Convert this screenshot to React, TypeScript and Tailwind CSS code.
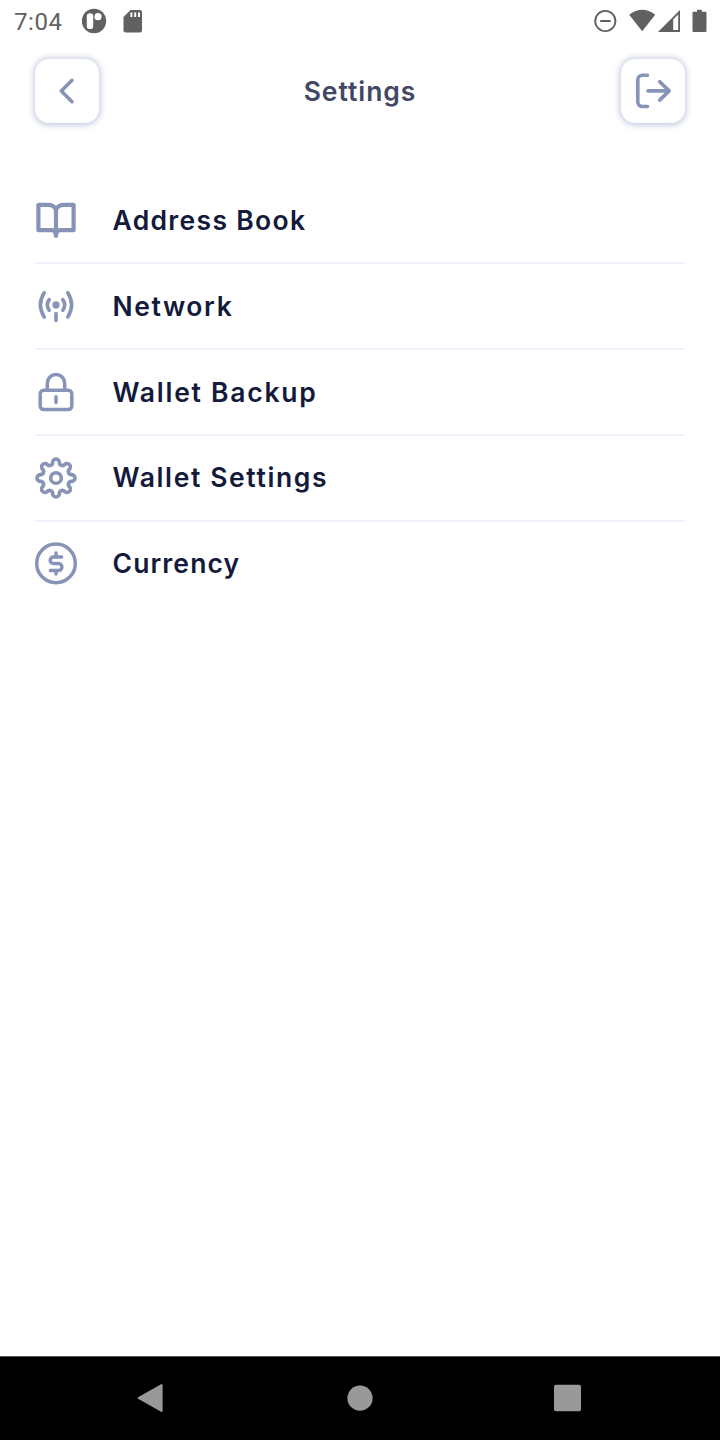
import type { ReactNode } from "react";

const polar = (r: number, deg: number) => {
  const a = (deg * Math.PI) / 180;
  return [21 + r * Math.cos(a), 21 + r * Math.sin(a)];
};

// Eight round teeth joined by round valleys, as tangent arcs.
const gearPath = (() => {
  const tip = 3.4;
  const valley = 3;
  const f = tip / (tip + valley);
  let d = "";
  for (let i = 0; i <= 8; i++) {
    const c = polar(16.1, i * 45);
    const before = polar(16.7, i * 45 - 22.5);
    const after = polar(16.7, i * 45 + 22.5);
    const p = [c[0] + (before[0] - c[0]) * f, c[1] + (before[1] - c[1]) * f];
    const q = [c[0] + (after[0] - c[0]) * f, c[1] + (after[1] - c[1]) * f];
    d += i === 0 ? `M${p[0]} ${p[1]}` : `A${valley} ${valley} 0 0 0 ${p[0]} ${p[1]}`;
    d += i === 8 ? "Z" : `A${tip} ${tip} 0 0 1 ${q[0]} ${q[1]}`;
  }
  return d;
})();

function Icon({ children, width = 3.5 }: { children: ReactNode; width?: number }) {
  return (
    <svg
      className="size-[42px] shrink-0 overflow-visible text-[#8794b7]"
      viewBox="0 0 42 42"
      fill="none"
      stroke="currentColor"
      strokeWidth={width}
      strokeLinecap="round"
      strokeLinejoin="round"
    >
      {children}
    </svg>
  );
}

const items = [
  {
    label: "Address Book",
    text: "tracking-[1.3px]",
    icon: (
      <Icon width={4.2}>
        <path d="M21 10.5C19.5 7.3 16.5 5.8 13 5.8H3.4V31.2H16.5C19.5 31.2 21 33 21 37C21 33 22.5 31.2 25.5 31.2H38.6V5.8H29C25.5 5.8 22.5 7.3 21 10.5V33" />
      </Icon>
    ),
  },
  {
    label: "Network",
    text: "tracking-[1.6px]",
    icon: (
      <Icon width={3.6}>
        <circle cx="21" cy="19.9" r="3.6" fill="currentColor" stroke="none" />
        <path d="M21 28.6V35.4M14.2 14.6Q10.4 19.9 14.2 25.2M27.8 14.6Q31.6 19.9 27.8 25.2M9.2 7.8Q1.6 19.9 9.2 32M32.8 7.8Q40.4 19.9 32.8 32" />
      </Icon>
    ),
  },
  {
    label: "Wallet Backup",
    text: "tracking-[1.75px]",
    icon: (
      <Icon>
        <rect x="5.2" y="19.2" width="31.6" height="19.4" rx="3.5" />
        <path d="M12.3 19V12.2a8.7 8.7 0 0 1 17.4 0V19M21 25.8V31.4" />
      </Icon>
    ),
  },
  {
    label: "Wallet Settings",
    text: "tracking-[1.62px]",
    icon: (
      <Icon width={3.6}>
        <path d={gearPath} />
        <circle cx="21" cy="21" r="5.3" />
      </Icon>
    ),
  },
  {
    label: "Currency",
    text: "tracking-[1.1px]",
    icon: (
      <Icon>
        <circle cx="21" cy="21.4" r="19.3" />
        <path d="M26.6 15H18.5a3.3 3.3 0 0 0 0 6.6H23.5a3.4 3.4 0 0 1 0 6.8H15.4M21 10.9V15M21 28.4V32.1" />
      </Icon>
    ),
  },
];

function HeaderButton({ label, children }: { label: string; children: ReactNode }) {
  return (
    <button
      aria-label={label}
      className="flex size-16 items-center justify-center rounded-[14px] bg-white shadow-[0_0.5px_6px_1px_rgba(120,135,180,0.48)]"
    >
      <svg
        className="size-16 shrink-0 text-[#8794b7]"
        viewBox="0 0 64 64"
        fill="none"
        stroke="currentColor"
        strokeWidth="3.6"
        strokeLinecap="round"
        strokeLinejoin="round"
      >
        {children}
      </svg>
    </button>
  );
}

function StatusBar() {
  return (
    <div className="flex h-[42px] items-center justify-between font-[Roboto,sans-serif] text-[#616161]">
      <div className="flex items-center pl-[14px]">
        <span className="w-[68px] pt-px text-[24px] leading-none tracking-[0.6px]">7:04</span>
        <svg className="h-[26px] w-[64px]" viewBox="82 8 64 26" fill="currentColor">
          <circle cx="94" cy="21" r="12.2" />
          <rect x="86.8" y="13.3" width="6.4" height="15.8" rx="3.2" fill="white" />
          <circle cx="98" cy="16.7" r="3.6" fill="white" />
          <path d="M130.5 10H140a2 2 0 0 1 2 2V30.5a2 2 0 0 1-2 2H125.5a2 2 0 0 1-2-2V17Z" />
          <path d="M130.4 12.5h2v4.5h-2zM134.2 12.5h2v4.5h-2zM138 12.5h2v4.5h-2z" fill="white" />
        </svg>
      </div>
      <svg className="h-[26px] w-[128px]" viewBox="592 8 128 26" fill="currentColor">
        <circle cx="605.3" cy="21" r="10.1" fill="none" stroke="currentColor" strokeWidth="1.9" />
        <path d="M600.2 20h10.4v2h-10.4z" />
        <path d="M629.2 14.8Q642.2 4.9 655.2 14.8L642.2 31.3Z" />
        <path d="M680 10V32H658Z" />
        <path d="M673.2 19.5L678.2 14.5V30H673.2Z" fill="white" />
        <path d="M697 9.8h4.8v2H705.5a1 1 0 0 1 1 1V31a1 1 0 0 1-1 1H693.5a1 1 0 0 1-1-1V12.8a1 1 0 0 1 1-1H697Z" />
      </svg>
    </div>
  );
}

export default function App() {
  return (
    <div className="flex h-[1440px] w-[720px] flex-col overflow-hidden bg-white font-[Inter,sans-serif]">
      <StatusBar />
      <header className="flex h-[98px] items-center justify-between px-[34.5px]">
        <HeaderButton label="Back">
          <path d="M37 21.3L26.3 32L37 42.7" />
        </HeaderButton>
        <h1 className="text-[26.5px] leading-none font-semibold tracking-[0.95px] text-[#434766]">Settings</h1>
        <HeaderButton label="Log out">
          <path d="M26.5 16.2H21.3a4.5 4.5 0 0 0-4.5 4.5V43a4.5 4.5 0 0 0 4.5 4.5H26.5M27 31.9H48.2M38.7 22.7L48.2 31.9L38.7 41.1" />
        </HeaderButton>
      </header>
      <ul className="mt-[38.5px] px-[35px]">
        {items.map((item) => (
          <li
            key={item.label}
            className="flex h-[85.75px] items-center border-b-2 border-[#f0f2fb] last:border-transparent"
          >
            {item.icon}
            <span className={`ml-[35.5px] text-[26.5px] leading-none font-semibold whitespace-nowrap text-[#141a3c] ${item.text}`}>
              {item.label}
            </span>
          </li>
        ))}
      </ul>
      <nav className="mt-auto h-[84px] border-t border-[#555] bg-black">
        <svg className="h-[83px] w-[720px]" viewBox="0 1357 720 83" fill="#999">
          <path d="M138.5 1398L161.6 1385V1411Z" stroke="#999" strokeWidth="2" strokeLinejoin="round" />
          <circle cx="360" cy="1398.2" r="12.6" />
          <rect x="554" y="1384.8" width="27" height="26.5" rx="2" />
        </svg>
      </nav>
    </div>
  );
}
